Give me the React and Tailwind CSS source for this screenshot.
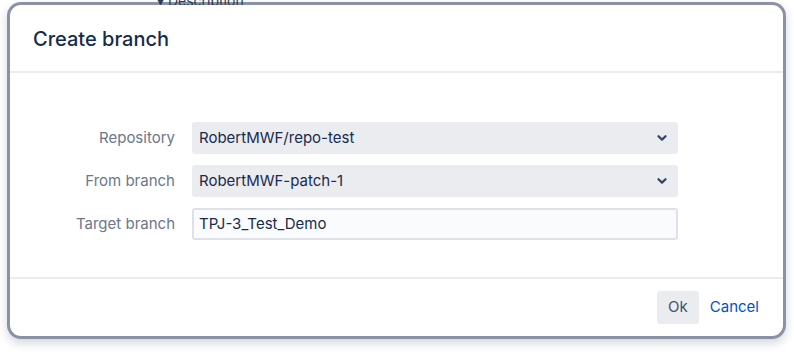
import React from 'react';

const font = { fontFamily: 'Inter, "Noto Sans", "Liberation Sans", sans-serif' };

function Chevron() {
  return (
    <svg width="10" height="8" viewBox="0 0 10 8" className="shrink-0">
      <path d="M1.5 2.2 L5 5.6 L8.5 2.2" fill="none" stroke="#344563" strokeWidth="2.2" strokeLinecap="round" strokeLinejoin="round" />
    </svg>
  );
}

function SelectField({ value }) {
  return (
    <div className="w-[486px] h-[32px] rounded-[3px] bg-[#ebecf0] flex items-center justify-between pl-[7px] pr-[11px] text-[15px] text-[#172b4d]">
      <span>{value}</span>
      <Chevron />
    </div>
  );
}

function Row({ label, children }) {
  return (
    <div className="flex items-center">
      <div className="w-[165px] text-right text-[15px] text-[#6b778c]">{label}</div>
      <div className="ml-[17px]">{children}</div>
    </div>
  );
}

export default function App() {
  return (
    <div className="w-[794px] h-[352px] bg-white pt-[2px] pl-[7px] overflow-hidden" style={font}>
      {/* blanket behind the dialog */}
      <div className="relative w-[779px] h-[337px] rounded-[14px] bg-[#8993a4] p-[3px] shadow-[0_4px_10px_rgba(9,30,66,0.18)]">
        <span className="absolute left-[150px] top-[-12px] text-[14px] text-[#2c3a57] whitespace-nowrap">▾ Description</span>

        {/* dialog */}
        <div className="relative w-full h-full rounded-[11px] bg-white flex flex-col">
          <div className="h-[68px] shrink-0 border-b-2 border-[#ebecf0] flex items-center pl-[23px] pt-[2px]">
            <h1 className="text-[20px] font-medium text-[#172b4d]">Create branch</h1>
          </div>

          <div className="flex-1 flex flex-col gap-[11px] pt-[49px]">
            <Row label="Repository">
              <SelectField value="RobertMWF/repo-test" />
            </Row>
            <Row label="From branch">
              <SelectField value="RobertMWF-patch-1" />
            </Row>
            <Row label="Target branch">
              <div className="w-[486px] h-[32px] rounded-[3px] border-2 border-[#dfe1e6] bg-[#fafbfc] flex items-center pl-[5px] text-[15px] text-[#172b4d]">
                TPJ-3_Test_Demo
              </div>
            </Row>
          </div>

          <div className="h-[59px] shrink-0 border-t-2 border-[#ebecf0] flex items-center justify-end pr-[24px] gap-[11px]">
            <button className="h-[33px] px-[11px] rounded-[3px] bg-[#ebecf0] text-[15px] text-[#42526e]">Ok</button>
            <button className="text-[15px] text-[#0052cc]">Cancel</button>
          </div>
        </div>
      </div>
    </div>
  );
}
